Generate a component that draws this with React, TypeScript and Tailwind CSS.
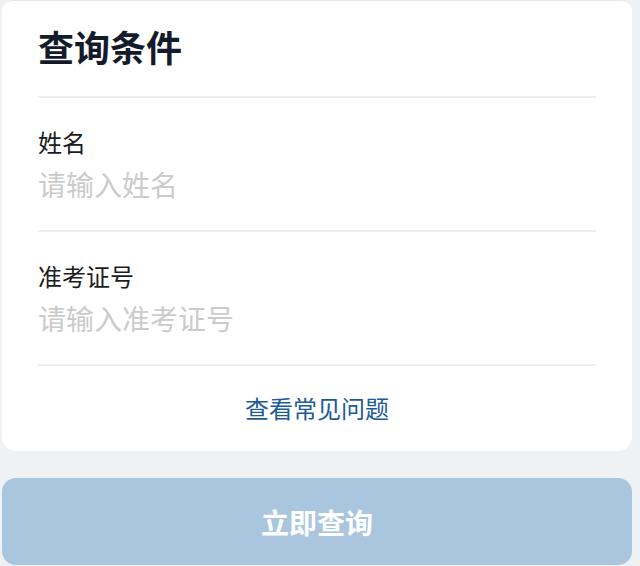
import { useState } from "react";

const font = { fontFamily: '"Noto Sans CJK SC", "Noto Sans", sans-serif' };

function Field({ label, placeholder }: { label: string; placeholder: string }) {
	const [value, setValue] = useState("");

	return (
		<div className="h-[134px] border-b-2 border-[#eeeeee] pt-[28px]">
			<div className="text-[24px] leading-[32px] text-[#1c1c1c]">{label}</div>
			<input
				value={value}
				onChange={(e) => setValue(e.target.value)}
				placeholder={placeholder}
				className="mt-[6px] block h-[40px] w-full bg-transparent text-[28px] leading-[40px] text-[#1c1c1c] outline-none placeholder:text-[#cbcbcb]"
			/>
		</div>
	);
}

export default function App() {
	return (
		<div className="min-h-[566px] w-[640px] bg-[#eef2f4] px-[2px]" style={font}>
			<div className="w-[630px] rounded-b-[14px] rounded-t-[10px] border-t border-[#e6e9eb] bg-white px-[36px]">
				<div className="flex h-[97px] items-center border-b-2 border-[#eeeeee] pb-[6px]">
					<h1 className="text-[36px] font-bold leading-[44px] text-[#141b2b]">查询条件</h1>
				</div>

				<Field label="姓名" placeholder="请输入姓名" />
				<Field label="准考证号" placeholder="请输入准考证号" />

				<div className="flex h-[85px] items-center justify-center pb-[2px]">
					<a href="#" className="text-[24px] leading-[32px] text-[#1d5b98]">
						查看常见问题
					</a>
				</div>
			</div>

			<button
				type="button"
				className="mt-[27px] flex h-[87px] w-[630px] items-center justify-center rounded-[14px] bg-[#aac6de] text-[28px] font-bold text-white"
			>
				立即查询
			</button>
		</div>
	);
}
